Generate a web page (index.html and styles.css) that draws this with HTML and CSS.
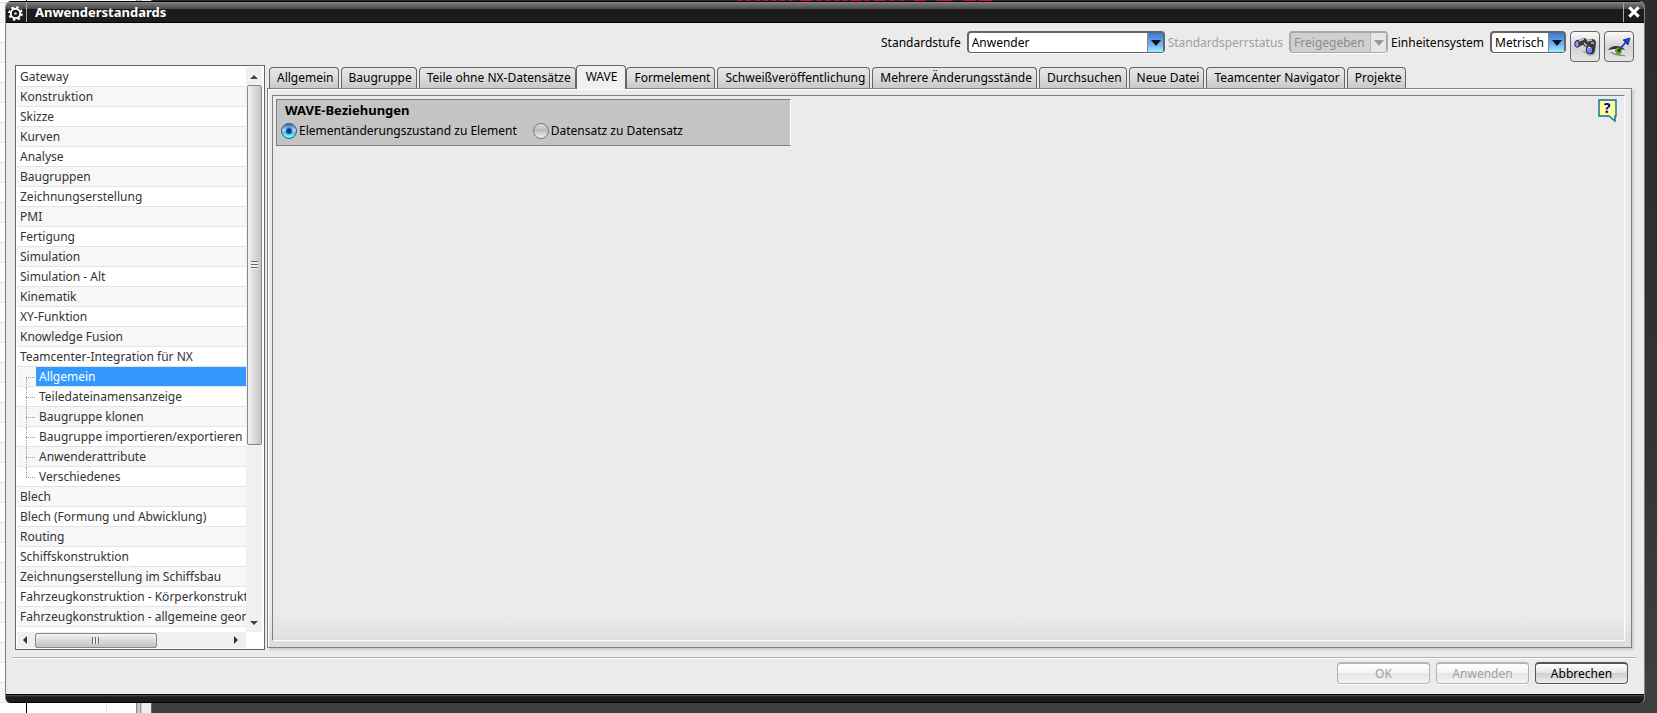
FILE: index.html
```html
<!DOCTYPE html>
<html lang="de">
<head>
  <meta charset="UTF-8">
  <meta name="viewport" content="width=device-width, initial-scale=1.0">
  <title>Anwenderstandards</title>
  <link rel="stylesheet" href="styles.css">
</head>
<body>
  <div class="desktop-list"></div>
  <p class="desktop-title">mikromision 5 &amp; 32</p>

  <main class="dialog">
    <header class="titlebar">
      <span class="titlebar-icon">
        <svg width="15" height="15" viewBox="0 0 14 14">
          <circle cx="7" cy="7" r="4.4" fill="none" stroke="#fff" stroke-width="1.800"/>
          <circle cx="7" cy="7" r="6" fill="none" stroke="#fff" stroke-width="1.600" stroke-dasharray="2.300 2.412"/>
          <circle cx="7" cy="7" r="1.2" fill="#ddd"/>
        </svg>
      </span>
      <h1>Anwenderstandards</h1>
      <button class="close-btn" aria-label="Schließen">
        <svg width="14" height="14" viewBox="0 0 12 12">
          <path d="M2 2L10 10M10 2L2 10" stroke="#fff" stroke-width="2.600"/>
        </svg>
      </button>
    </header>

    <div class="toolbar">
      <label for="level">Standardstufe</label>
      <span class="select-box level"><select id="level"><option>Anwender</option></select></span>
      <label for="lock" class="disabled">Standardsperrstatus</label>
      <span class="select-box lock disabled"><select id="lock" disabled><option>Freigegeben</option></select></span>
      <label for="units">Einheitensystem</label>
      <span class="select-box units"><select id="units"><option>Metrisch</option></select></span>
      <button class="tool-btn" aria-label="Suchen">
        <svg width="24" height="24" viewBox="0 0 24 24">
          <path d="M8 16l8 5 6-1-4-5z" fill="#b4b4b4"/>
          <path d="M2 7q1-3 4-2l5-2q2 0 3 2l5-1q3 0 4 3l-1 9q-1 4-5 3-4-1-3-6l-4-3-3 1-1 1q-3 1-4-5z" fill="#3a3a3a"/>
          <path d="M6 6l5-2M14 6l5-1M11 8l3 3M18 8l3 0" stroke="#c4c4c4" stroke-width="1.500"/>
          <ellipse cx="4" cy="9" rx="2.200" ry="3.300" fill="#8f9cf0" stroke="#24245c"/>
          <ellipse cx="16.500" cy="15" rx="3.300" ry="3.800" fill="#7786e8" stroke="#24245c"/>
          <path d="M15 13l2-1" stroke="#fff"/>
        </svg>
      </button>
      <button class="tool-btn" aria-label="Anzeigen">
        <svg width="24" height="24" viewBox="0 0 24 24">
          <path d="M3 16q5-4 14-2l-1 4q-7 4-13-2z" fill="#eee"/>
          <path d="M1 15q3-4 8-4 6 0 9 4-8-2-17 0z" fill="#333"/>
          <path d="M4 17q5 4 10 3l4 1" fill="none" stroke="#777" stroke-width="1.200"/>
          <circle cx="11.500" cy="16" r="3.400" fill="#5ba51d"/>
          <circle cx="12" cy="15.500" r="1.400" fill="#143306"/>
          <path d="M12 15L19 7" stroke="#1d34a8" stroke-width="1.800"/>
          <path d="M16 5l7-2-2 7z" fill="#2344c4" stroke="#14257a" stroke-width="0.800"/>
        </svg>
      </button>
    </div>

    <div class="content">
      <nav class="tree">
        <ul class="tree-list">
          <li>Gateway</li>
          <li>Konstruktion</li>
          <li>Skizze</li>
          <li>Kurven</li>
          <li>Analyse</li>
          <li>Baugruppen</li>
          <li>Zeichnungserstellung</li>
          <li>PMI</li>
          <li>Fertigung</li>
          <li>Simulation</li>
          <li>Simulation - Alt</li>
          <li>Kinematik</li>
          <li>XY-Funktion</li>
          <li>Knowledge Fusion</li>
          <li>Teamcenter-Integration für NX</li>
          <li class="child selected"><span>Allgemein</span></li>
          <li class="child"><span>Teiledateinamensanzeige</span></li>
          <li class="child"><span>Baugruppe klonen</span></li>
          <li class="child"><span>Baugruppe importieren/exportieren</span></li>
          <li class="child"><span>Anwenderattribute</span></li>
          <li class="child last"><span>Verschiedenes</span></li>
          <li>Blech</li>
          <li>Blech (Formung und Abwicklung)</li>
          <li>Routing</li>
          <li>Schiffskonstruktion</li>
          <li>Zeichnungserstellung im Schiffsbau</li>
          <li>Fahrzeugkonstruktion - Körperkonstruktion</li>
          <li>Fahrzeugkonstruktion - allgemeine geometrische</li>
        </ul>
        <div class="scrollbar vertical">
          <svg width="8" height="5" viewBox="0 0 8 5"><path d="M0 5L4 1L8 5z" fill="#444"/></svg>
          <div class="track"><div class="thumb"><i class="grip"></i></div></div>
          <svg width="8" height="5" viewBox="0 0 8 5"><path d="M0 0L4 4L8 0z" fill="#444"/></svg>
        </div>
        <div class="scrollbar horizontal">
          <svg width="5" height="8" viewBox="0 0 5 8"><path d="M5 0L1 4L5 8z" fill="#333"/></svg>
          <div class="track"><div class="thumb"><i class="grip"></i></div></div>
          <svg width="5" height="8" viewBox="0 0 5 8"><path d="M0 0L4 4L0 8z" fill="#333"/></svg>
        </div>
      </nav>

      <section class="tabs">
        <div class="tab-row">
          <button class="tab">Allgemein</button>
          <button class="tab">Baugruppe</button>
          <button class="tab">Teile ohne NX-Datensätze</button>
          <button class="tab active">WAVE</button>
          <button class="tab">Formelement</button>
          <button class="tab">Schweißveröffentlichung</button>
          <button class="tab">Mehrere Änderungsstände</button>
          <button class="tab">Durchsuchen</button>
          <button class="tab">Neue Datei</button>
          <button class="tab">Teamcenter Navigator</button>
          <button class="tab">Projekte</button>
        </div>
        <div class="tab-panel">
          <div class="tab-page">
            <div class="group" role="radiogroup" aria-labelledby="waveTitle">
              <h2 id="waveTitle">WAVE-Beziehungen</h2>
              <div class="radios">
                <input type="radio" name="wave" id="waveElement" checked>
                <label for="waveElement">Elementänderungszustand zu Element</label>
                <input type="radio" name="wave" id="waveDataset">
                <label for="waveDataset">Datensatz zu Datensatz</label>
              </div>
            </div>
            <button class="help-btn" aria-label="Hilfe">
              <svg width="20" height="24" viewBox="0 0 20 24">
                <path d="M1 1H18V17H17V22L11 17H1z" fill="#ffff99" stroke="#0a6ea0" stroke-width="1.400"/>
                <text x="9" y="14" text-anchor="middle" class="help-mark">?</text>
              </svg>
            </button>
          </div>
        </div>
      </section>
    </div>

    <footer class="actions">
      <button class="btn" disabled>OK</button>
      <button class="btn" disabled>Anwenden</button>
      <button class="btn">Abbrechen</button>
    </footer>
    <div class="dialog-base"></div>
  </main>
</body>
</html>
```

FILE: styles.css
```css
* {
  box-sizing: border-box;
}

body {
  margin: 0;
  height: 100vh;
  padding: 1px 12px 10px 5px;
  position: relative;
  overflow: hidden;
  background: linear-gradient(#2b2b2b, #333 60%, #404040);
  font-family: "Noto Sans", "Open Sans", sans-serif;
  font-size: 12px;
  line-height: 16px;
  color: #000;
}

button,
select {
  font: inherit;
  color: inherit;
}

/* windows behind the dialog */
.desktop-list {
  position: absolute;
  left: 0;
  top: 0;
  bottom: 0;
  width: 152px;
  background:
    linear-gradient(90deg, transparent 26px, #000 26px, #000 27px, transparent 27px, transparent 106px, #e4e4e4 106px, #e4e4e4 107px, transparent 107px, transparent 136px, #777 136px, #ccc 138px, #ccc 140px, #777 140px, #eee 142px, #eee 151px, #666 151px),
    repeating-linear-gradient(#fff 0, #fff 2px, #e4e4e4 2px, #e4e4e4 3px, #f7f7f7 3px, #f7f7f7 22px, #e4e4e4 22px, #e4e4e4 23px, #fff 23px, #fff 40px);
}

.desktop-title {
  position: absolute;
  left: 735px;
  bottom: 100%;
  margin: 0 0 -9px;
  font-size: 27px;
  line-height: 32px;
  font-weight: bold;
  color: #e0084c;
}

.dialog {
  position: relative;
  height: 100%;
  display: flex;
  flex-direction: column;
  background: #ebebeb;
  border-left: 1px solid #808080;
  border-right: 1px solid #808080;
  border-radius: 6px 6px 5px 5px;
  overflow: hidden;
}

.titlebar {
  height: 22px;
  flex: none;
  display: flex;
  align-items: center;
  background: linear-gradient(#000 0, #000 1px, #999 1px, #777 2px, #4a4a4a 8px, #1c1c1c 8px, #1c1c1c 21px, #000 21px);
  color: #fff;
}

.titlebar h1 {
  flex: 1;
  margin: 0 8px;
  font-size: 13px;
  line-height: 20px;
}

.titlebar-icon {
  width: 21px;
  height: 19px;
  padding: 3px 2px;
  border-right: 1px solid #aaa;
  display: flex;
}

.close-btn {
  width: 21px;
  height: 19px;
  padding: 0;
  border: 0;
  border-left: 1px solid #aaa;
  background: none;
  display: flex;
  align-items: center;
  justify-content: center;
}

.toolbar {
  height: 42px;
  flex: none;
  padding: 8px 10px 0 0;
  display: flex;
  justify-content: flex-end;
  align-items: flex-start;
}

.toolbar label {
  line-height: 24px;
  margin: 0 6px 0 3px;
}

.toolbar label.disabled {
  color: #a0a0a0;
}

.select-box {
  position: relative;
  height: 22px;
  border: 2px solid #666;
  border-bottom-width: 1px;
  border-radius: 4px;
  background: #fff;
  box-shadow: 0 1px 0 #fff;
}

.select-box select {
  appearance: none;
  width: 100%;
  height: 19px;
  padding: 0 20px 0 3px;
  border: 0;
  background: none;
  opacity: 1;
}

.select-box::before {
  content: "";
  position: absolute;
  right: 0;
  top: 0;
  bottom: 0;
  width: 15px;
  background: linear-gradient(#3c78d8, #6cb4f0 60%, #a4ecff);
  border-left: 1px solid #888;
}

.select-box::after {
  content: "";
  position: absolute;
  right: 2px;
  top: 7px;
  border: 5px solid transparent;
  border-top: 6px solid #111;
  border-bottom: 0;
}

.level { width: 198px; }
.lock { width: 99px; }
.units { width: 76px; margin-right: 4px; }

.select-box.disabled {
  background: #d0d0d0;
  border-color: #aaa;
  color: #8c8c8c;
}

.select-box.disabled::before {
  background: #e6e6e6;
  border-color: #bbb;
}

.select-box.disabled::after {
  border-top-color: #999;
}

.tool-btn {
  width: 30px;
  height: 31px;
  padding: 0;
  margin-left: 4px;
  border: 1px solid #666;
  border-radius: 4px;
  background: linear-gradient(#fafafa, #d4d4d4 50%, #e4e4e4);
  display: flex;
  align-items: center;
  justify-content: center;
}

.units + .tool-btn {
  margin-left: 0;
}

.content {
  flex: 1;
  min-height: 0;
  display: flex;
  padding: 0 12px 0 9px;
  gap: 2px;
}

.tree {
  width: 250px;
  flex: none;
  display: grid;
  grid-template-columns: 1fr 16px;
  grid-template-rows: 1fr 16px;
  padding: 1px 2px 1px 1px;
  border: 1px solid #666;
  background: #fff;
}

.tree-list {
  list-style: none;
  margin: 0;
  padding: 0;
  min-width: 0;
  min-height: 0;
  overflow: hidden;
  color: #333;
}

.tree-list li {
  height: 20px;
  padding-left: 3px;
  line-height: 19px;
  border-bottom: 1px solid #e4e4e4;
  white-space: nowrap;
  overflow: hidden;
}

.tree-list li:nth-child(even) {
  background: #f7f7f7;
}

.tree-list .child {
  position: relative;
  padding-left: 19px;
}

.tree-list .child span {
  display: block;
  padding-left: 3px;
}

.tree-list .selected span {
  background: #3399ff;
  color: #fff;
}

/* dotted branch lines */
.child::before {
  content: "";
  position: absolute;
  left: 9px;
  top: 0;
  height: 20px;
  border-left: 1px dotted #999;
}

.child::after {
  content: "";
  position: absolute;
  left: 9px;
  top: 10px;
  width: 9px;
  border-top: 1px dotted #999;
}

.child.selected::before {
  top: 10px;
  height: 10px;
}

.child.last::before {
  height: 10px;
}

.scrollbar {
  display: flex;
  align-items: center;
  background: #f0f0f0;
}

.scrollbar .track {
  flex: 1;
}

.vertical {
  flex-direction: column;
  padding: 7px 0 6px;
}

.vertical .track {
  width: 15px;
  margin: 6px 0;
}

.horizontal {
  padding: 0 7px 0 5px;
}

.horizontal .track {
  height: 15px;
  margin: 0 8px;
}

.thumb {
  display: flex;
  align-items: center;
  justify-content: center;
  border: 1px solid #888;
  border-radius: 2px;
}

.vertical .thumb {
  height: 68%;
  background: linear-gradient(90deg, #f4f4f4, #dcdcdc 45%, #c4c4c8);
}

.horizontal .thumb {
  width: 64%;
  height: 100%;
  background: linear-gradient(#f4f4f4, #dcdcdc 45%, #c4c4c8);
}

.grip {
  width: 8px;
  height: 7px;
  background: repeating-linear-gradient(90deg, #666 0, #666 1px, #eee 1px, #eee 3px);
}

.vertical .grip {
  width: 7px;
  height: 8px;
  background: repeating-linear-gradient(#666 0, #666 1px, #eee 1px, #eee 3px);
}

.tabs {
  flex: 1;
  min-width: 0;
  display: flex;
  flex-direction: column;
  padding-bottom: 2px;
}

.tab-row {
  display: flex;
  align-items: flex-end;
  height: 23px;
  padding-left: 2px;
  gap: 2px;
}

.tab {
  height: 21px;
  padding: 0 4px 0 7px;
  border: 1px solid #666;
  border-bottom: 0;
  border-radius: 4px 4px 0 0;
  background: linear-gradient(#e8e8e8, #dcdcdc 50%, #c8c8c8);
  white-space: nowrap;
}

.tab.active {
  position: relative;
  height: 24px;
  margin: 0 -2px -1px;
  padding: 0 8px 2px 9px;
  background: #f0f0f0;
}

.tab-panel {
  flex: 1;
  padding: 6px 6px 6px 4px;
  border: 1px solid #808080;
  box-shadow: inset 1px 1px 0 #fff, 2px 2px 2px #ccc;
  background: linear-gradient(#ebebeb 94%, #dcdcdc);
  display: flex;
}

.tab-page {
  flex: 1;
  display: flex;
  align-items: flex-start;
  justify-content: space-between;
  padding: 3px 6px 3px 3px;
  border: 1px solid #808080;
  border-right-color: #fff;
  border-bottom-color: #fff;
}

.group {
  width: 515px;
  height: 47px;
  padding: 2px 4px;
  border: 1px solid #808080;
  border-right-color: #fff;
  background: #c4c4c4;
}

.group h2 {
  margin: 0 4px;
  font-size: 13px;
  line-height: 17px;
}

.radios {
  display: flex;
  align-items: center;
  height: 24px;
}

.radios label {
  margin: 0 16px 0 2px;
}

.radios input {
  appearance: none;
  width: 16px;
  height: 16px;
  margin: 0;
  border: 1px solid #777;
  border-radius: 50%;
  background: linear-gradient(#ddd, #bbb 45%, #f0f0f0);
}

.radios input:checked {
  border-color: #35577c;
  background: radial-gradient(circle at 50% 50%, #003c88 0, #003c88 2px, transparent 4px), linear-gradient(#2b6cb0, #b8dcf8 45%, #4cc8f0 60%, #7ff);
}

.help-btn {
  padding: 0;
  border: 0;
  margin: 0;
  background: none;
  display: flex;
}

.help-mark {
  font-size: 14px;
  font-weight: bold;
  fill: #0000b0;
}

.actions {
  flex: none;
  display: flex;
  justify-content: flex-end;
  gap: 6px;
  margin: 7px 7px 0 6px;
  padding: 4px 9px 10px 0;
  border-top: 1px solid #b4b4b4;
  box-shadow: inset 0 1px 0 #fff;
}

.btn {
  width: 93px;
  height: 22px;
  padding: 0;
  border: 1px solid #555;
  border-top-width: 2px;
  border-radius: 4px;
  background: linear-gradient(#fff, #e4e4e4 48%, #cfcfd2 50%, #eee);
  box-shadow: 0 1px 0 #fff;
}

.btn:disabled {
  border-color: #b4b4b4;
  background: linear-gradient(#fff, #f4f4f4 48%, #e6e6e6 50%, #f4f4f4);
  color: #a0a0a0;
}

.dialog-base {
  flex: none;
  height: 9px;
  background: linear-gradient(#000 0, #000 1px, #555 1px, #1c1c1c 3px, #1c1c1c 8px, #000 8px);
}
```
